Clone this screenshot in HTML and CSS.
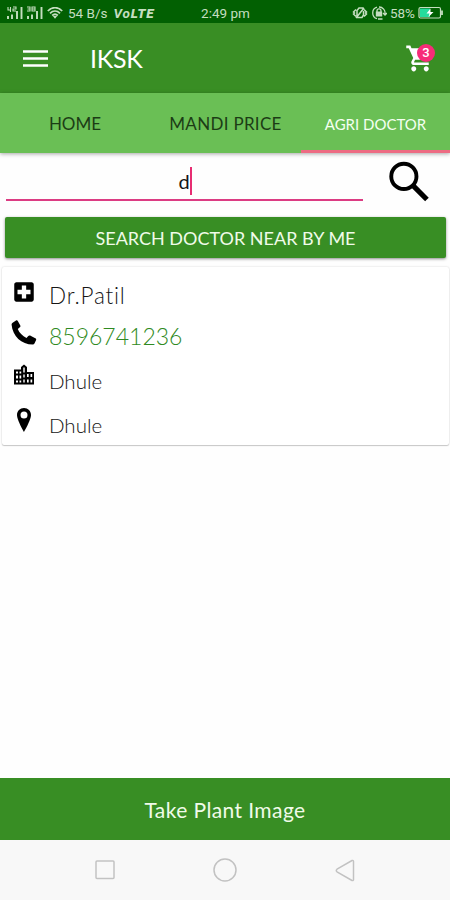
FILE: index.html
```html
<!DOCTYPE html>
<html lang="en">
<head>
    <meta charset="UTF-8">
    <meta name="viewport" content="width=device-width, initial-scale=1.0">
    <title>IKSK - Agri Doctor</title>
    <link rel="stylesheet" href="styles.css">
</head>
<body>
    <div class="status-bar">
        <div class="status-left">
            <svg class="signals" width="37" height="14" viewBox="0 0 37 14">
                <path d="M1 10v3M5 8.500v4.500M10 5v8M14.500 1v12M21 10v3M25 8.500v4.500M30 5v8M34.500 1v12" stroke="currentColor" stroke-width="1.900"/>
                <path d="M1 1v3h3M3.500 1v5M6 1h3v2H6v2h3M20 1h3v4h-3M20.500 3H23M25 1h3v4h-3zM25 3h3" fill="none" stroke="currentColor" stroke-width="1.100"/>
            </svg>
            <svg class="wifi" width="16" height="12" viewBox="0 0 16 12">
                <path d="M.8 4C5-.4 11-.4 15.200 4M3 6.300c3-2.900 7-2.900 10 0M5.200 8.500c1.700-1.600 3.900-1.600 5.600 0" fill="none" stroke="currentColor" stroke-width="1.800"/>
                <path d="M5.800 9L8 11.800 10.200 9z" fill="currentColor"/>
            </svg>
            <span class="speed">54 B/s</span>
            <span class="volte">Vo<b>LTE</b></span>
        </div>
        <div class="clock">2:49 pm</div>
        <div class="status-right">
            <svg width="16" height="14" viewBox="0 0 16 14" fill="none" stroke="currentColor" stroke-width="1.500">
                <path d="M4 3.500L1.500 6l1 1-1 1L4 10.500M12 3.500L14.500 6l-1 1 1 1-2.500 2.500M5 10V4.500L7 2h4v2M5 11.500h5L11.500 9V5M4 12L12 2"/>
            </svg>
            <svg class="rotate-lock" width="16" height="14" viewBox="0 0 16 14" fill="none" stroke="currentColor" stroke-width="1.300">
                <path d="M6 12.700A6 6 0 0 1 6 1.200M8 1a6 6 0 0 1 6 7M12 7l2 2 2-2M7 13h4.500"/>
                <path d="M6 6V4.800a2 2 0 0 1 4 0V6"/>
                <path d="M4.800 5.500h6.400v5H4.800z" fill="currentColor" stroke="none"/>
            </svg>
            <span class="percent">58%</span>
            <svg width="26" height="14" viewBox="0 0 26 14">
                <rect x="1" y="1.500" width="21.500" height="10.500" rx="1.500" fill="none" stroke="currentColor" stroke-width="1.200"/>
                <path d="M2 2.500h10v8.500H2z" fill="#24dc9c"/>
                <path d="M12.500 2.500L8.500 7.500h3l-1 3.500 5-5h-3z" fill="#fff"/>
                <path d="M24 4.500v4.500" stroke="currentColor" stroke-width="1.800"/>
            </svg>
        </div>
    </div>

    <div class="toolbar">
        <svg class="menu-icon" width="25" height="17" viewBox="0 0 25 17">
            <path d="M0 1.500h25M0 8.500h25M0 15.500h25" stroke="#fff" stroke-width="2.700"/>
        </svg>
        <h1 class="app-title">IKSK</h1>
        <div class="cart">
            <svg width="30" height="31" viewBox="0 0 24 24" fill="#fff" preserveAspectRatio="none">
                <path d="M7 18c-1.100 0-1.990.9-1.990 2S5.900 22 7 22s2-.9 2-2-.9-2-2-2zM1 2v2h2l3.600 7.590-1.350 2.450c-.16.280-.25.610-.25.960 0 1.100.9 2 2 2h12v-2H7.420c-.14 0-.25-.11-.25-.25l.03-.12.900-1.630h7.450c.75 0 1.410-.41 1.750-1.030l3.580-6.490c.08-.14.120-.31.120-.48 0-.55-.45-1-1-1H5.210l-.94-2H1zm16 16c-1.100 0-1.990.9-1.990 2s.89 2 1.990 2 2-.9 2-2-.9-2-2-2z"/>
            </svg>
            <span class="cart-badge">3</span>
        </div>
    </div>

    <div class="tabs">
        <div class="tab tab-home"><span>HOME</span></div>
        <div class="tab tab-price"><span>MANDI PRICE</span></div>
        <div class="tab tab-doctor active"><span>AGRI DOCTOR</span></div>
    </div>

    <div class="search-row">
        <div class="search-input"><span>d</span><i class="caret"></i></div>
        <svg class="search-icon" width="41" height="41" viewBox="0 0 40 40" fill="none" stroke="#000">
            <circle cx="14.500" cy="15" r="12.300" stroke-width="3.800"/>
            <path d="M23.500 24L37 37.500" stroke-width="5"/>
        </svg>
    </div>

    <button class="search-btn">SEARCH DOCTOR NEAR BY ME</button>

    <div class="doctor-card">
        <div class="info-row name-row">
            <svg width="26" height="26" viewBox="0 0 24 24">
                <path d="M19 3H5c-1.100 0-2 .9-2 2v14c0 1.100.9 2 2 2h14c1.100 0 2-.9 2-2V5c0-1.100-.9-2-2-2zm-1 11h-4v4h-4v-4H6v-4h4V6h4v4h4v4z"/>
            </svg>
            <span>Dr.Patil</span>
        </div>
        <div class="info-row phone-row">
            <svg width="26" height="26" viewBox="0 0 26 26">
                <path d="M2 2.500L5 .5c.8-.4 1.400-.2 1.800.5l2.500 4.500c.3.700.1 1.400-.5 1.800L6.800 9c1.300 3.600 4.700 7 8.700 9l1.800-2c.5-.6 1.100-.7 1.800-.4l5.200 2.700c.8.400 1.100 1 .8 1.800l-1.500 3.200c-.4.800-1 1.200-1.900 1.200C10.500 24.500 1.500 16 .6 4.700c0-.9.400-1.600 1.400-2.200z"/>
            </svg>
            <span>8596741236</span>
        </div>
        <div class="info-row">
            <svg width="26" height="26" viewBox="0 0 26 26">
                <path fill-rule="evenodd" d="M3 5.500h7V3l3-2.500L16 3v5h7v12.500H3zM5 7.500v2h2v-2zm3.500 0v2h1.700v-2zM5 11.500v3h2v-3zm3.500 0v3h1.700v-3zM5 16.500v2h2v-2zm3.500 0v2h1.700v-2zM12.300 3.500v5h1.400v-5zm0 7v3h1.400v-3zm0 5v3h1.400v-3zM16 10v3h1.700v-3zm3.500 0v3h1.700v-3zM16 15.500v3h1.700v-3zm3.500 0v3h1.700v-3z"/>
            </svg>
            <span>Dhule</span>
        </div>
        <div class="info-row">
            <svg width="26" height="26" viewBox="0 0 26 26">
                <path fill-rule="evenodd" d="M13 0C9 0 6 3 6 7c0 5 7 17 7 17s7-12 7-17c0-4-3-7-7-7zm0 3.500a3.500 3.500 0 1 1 0 7 3.500 3.500 0 0 1 0-7z"/>
            </svg>
            <span>Dhule</span>
        </div>
    </div>

    <button class="take-image">Take Plant Image</button>

    <div class="nav-bar">
        <svg width="20" height="20" viewBox="0 0 20 20"><rect x="1" y="1" width="18" height="17.500" rx="1"/></svg>
        <svg width="24" height="24" viewBox="0 0 24 24"><circle cx="12" cy="12" r="11"/></svg>
        <svg width="20" height="23" viewBox="0 0 20 23"><path d="M2 10.200L17 1.500q1.500-.5 1.500 1v18q0 1.500-1.500 1L2 12.800q-1.500-1.300 0-2.600z"/></svg>
    </div>
</body>
</html>
```
FILE: styles.css
```css
* {
    margin: 0;
    padding: 0;
    box-sizing: border-box;
}
body {
    width: 450px;
    height: 900px;
    display: flex;
    flex-direction: column;
    font-family: Lato, 'Open Sans', sans-serif;
    font-variant-ligatures: none;
    background: #fefefe;
    color: #161616;
    overflow: hidden;
}
svg {
    display: block;
    flex: none;
}
button {
    border: none;
    font-family: inherit;
    color: #f0fbe9;
}
.status-bar {
    height: 23px;
    padding: 2px 6px 0 7px;
    background: #026002;
    color: #c5dec0;
    display: grid;
    grid-template-columns: 1fr auto 1fr;
    align-items: center;
    font-family: Roboto, sans-serif;
    font-size: 13.500px;
    line-height: 20px;
    white-space: nowrap;
}
.status-left,
.status-right {
    display: flex;
    align-items: center;
}
.status-right {
    justify-content: flex-end;
    gap: 3px;
}
.wifi {
    margin: 0 5px 0 3px;
}
.volte {
    margin-left: 6px;
    font-style: italic;
    font-weight: 700;
    font-size: 13.500px;
    letter-spacing: 0.8px;
}
.volte b {
    font-weight: 900;
}
.toolbar {
    height: 70px;
    padding: 0 15px 0 23px;
    background: #398e24;
    display: flex;
    align-items: center;
}
.app-title {
    margin-left: 42px;
    color: #fff;
    font-size: 25px;
    font-weight: 400;
    letter-spacing: -0.3px;
}
.cart {
    position: relative;
    margin-left: auto;
}
.cart-badge {
    position: absolute;
    top: 1px;
    right: 0;
    width: 18px;
    height: 18px;
    border-radius: 50%;
    background: #f72c78;
    color: #fff;
    font: 500 13px/18px Roboto, sans-serif;
    text-align: center;
}
.tabs {
    height: 60px;
    flex: none;
    display: grid;
    grid-template-columns: 150px 151px 149px;
    background: #6abf55;
    box-shadow: 0 1px 4px rgba(0, 0, 0, 0.35);
    font-size: 17px;
    color: #1c3c15;
}
.tab {
    display: flex;
    align-items: center;
    justify-content: center;
    padding-top: 1px;
}
.tab-price {
    letter-spacing: 0.3px;
}
.tab.active {
    color: #f5fff1;
    font-size: 15px;
    border-bottom: 3px solid #ed6b83;
    padding-top: 4px;
}
.search-row {
    height: 64px;
    padding: 8px 20px 0 6px;
    display: flex;
    justify-content: space-between;
}
.search-input {
    width: 357px;
    height: 40px;
    padding: 2px 0 0 1px;
    border-bottom: 2px solid #dc3c83;
    display: flex;
    align-items: center;
    justify-content: center;
    font-size: 20px;
}
.caret {
    width: 2px;
    height: 28px;
    background: #e72d72;
}
.search-btn {
    height: 41px;
    margin: 0 4px 0 5px;
    flex: none;
    border-radius: 2px;
    background: #388e24;
    box-shadow: 0 1px 3px rgba(0, 0, 0, 0.45);
    font-size: 18px;
}
.doctor-card {
    height: 178px;
    flex: none;
    margin: 9px 1px 0 2px;
    padding: 7px 9px 0;
    background: #fff;
    border-radius: 2px;
    box-shadow: 0 0 2px rgba(0, 0, 0, 0.18), 0 1px 1px rgba(0, 0, 0, 0.18);
}
.info-row {
    height: 44px;
    display: flex;
    gap: 12px;
    font-size: 20.500px;
    font-weight: 300;
    line-height: 44px;
}
.info-row svg {
    margin-top: 5px;
}
.name-row {
    height: 42px;
    font-size: 22.500px;
    letter-spacing: 0.8px;
}
.phone-row {
    height: 43px;
    font-size: 23px;
    line-height: 41px;
    color: #2f8a22;
}
.phone-row svg {
    margin-top: 4px;
}
.take-image {
    height: 62px;
    flex: none;
    margin-top: auto;
    background: #388e24;
    font-size: 21px;
    letter-spacing: 0.4px;
}
.nav-bar {
    height: 60px;
    flex: none;
    background: #f8f8f8;
    display: flex;
    justify-content: center;
    align-items: center;
    gap: 98px;
}
.nav-bar svg {
    fill: none;
    stroke: #c2c2c2;
    stroke-width: 1.500;
}
```
